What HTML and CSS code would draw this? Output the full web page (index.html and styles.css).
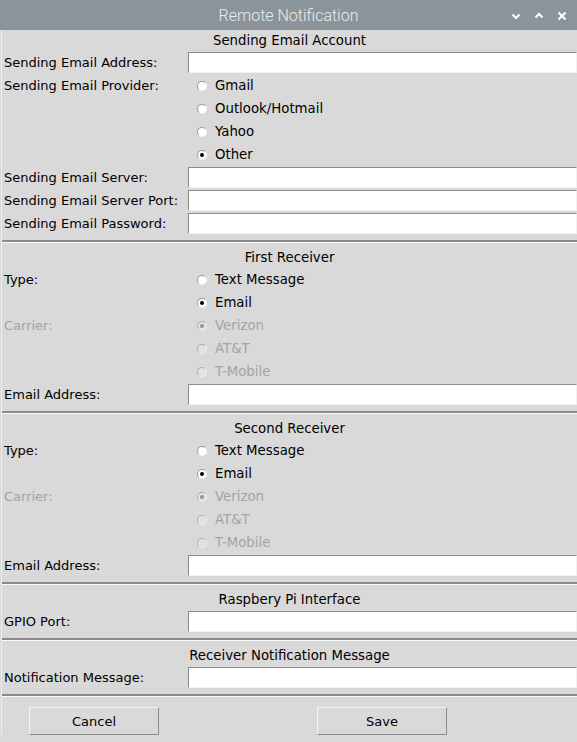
FILE: index.html
```html
<!DOCTYPE html>
<html>
<head>
<meta charset="utf-8">
<title>Remote Notification</title>
<link rel="stylesheet" href="styles.css">
</head>
<body>
<div class="window">
  <div class="titlebar">
    <span class="title">Remote Notification</span>
    <div class="controls">
      <svg class="ctl" width="12" height="12" viewBox="0 0 12 12"><path d="M2.5 4.5 L6 8 L9.5 4.5" fill="none" stroke="#fff" stroke-width="2"/></svg>
      <svg class="ctl" width="12" height="12" viewBox="0 0 12 12"><path d="M2.5 7.5 L6 4 L9.5 7.5" fill="none" stroke="#fff" stroke-width="2"/></svg>
      <svg class="ctl" width="12" height="12" viewBox="0 0 12 12"><path d="M2.5 2.5 L9.5 9.5 M9.5 2.5 L2.5 9.5" fill="none" stroke="#fff" stroke-width="2"/></svg>
    </div>
  </div>
  <div class="content">
    <section class="section first">
      <div class="heading">Sending Email Account</div>
      <div class="grid">
        <div class="label">Sending Email Address:</div><div class="cell"><input class="entry" type="text"></div>
        <div class="label">Sending Email Provider:</div><div class="cell"><span class="radio"><span class="dot"></span>Gmail</span></div>
        <div class="label"></div><div class="cell"><span class="radio"><span class="dot"></span>Outlook/Hotmail</span></div>
        <div class="label"></div><div class="cell"><span class="radio"><span class="dot"></span>Yahoo</span></div>
        <div class="label"></div><div class="cell"><span class="radio"><span class="dot on"></span>Other</span></div>
        <div class="label">Sending Email Server:</div><div class="cell"><input class="entry" type="text"></div>
        <div class="label">Sending Email Server Port:</div><div class="cell"><input class="entry" type="text"></div>
        <div class="label">Sending Email Password:</div><div class="cell"><input class="entry" type="password"></div>
      </div>
    </section>
    <hr class="sep">
    <section class="section">
      <div class="heading">First Receiver</div>
      <div class="grid">
        <div class="label">Type:</div><div class="cell"><span class="radio"><span class="dot"></span>Text Message</span></div>
        <div class="label"></div><div class="cell"><span class="radio"><span class="dot on"></span>Email</span></div>
        <div class="label disabled">Carrier:</div><div class="cell"><span class="radio disabled"><span class="dot on"></span>Verizon</span></div>
        <div class="label"></div><div class="cell"><span class="radio disabled"><span class="dot"></span>AT&amp;T</span></div>
        <div class="label"></div><div class="cell"><span class="radio disabled"><span class="dot"></span>T-Mobile</span></div>
        <div class="label">Email Address:</div><div class="cell"><input class="entry" type="text"></div>
      </div>
    </section>
    <hr class="sep">
    <section class="section">
      <div class="heading">Second Receiver</div>
      <div class="grid">
        <div class="label">Type:</div><div class="cell"><span class="radio"><span class="dot"></span>Text Message</span></div>
        <div class="label"></div><div class="cell"><span class="radio"><span class="dot on"></span>Email</span></div>
        <div class="label disabled">Carrier:</div><div class="cell"><span class="radio disabled"><span class="dot on"></span>Verizon</span></div>
        <div class="label"></div><div class="cell"><span class="radio disabled"><span class="dot"></span>AT&amp;T</span></div>
        <div class="label"></div><div class="cell"><span class="radio disabled"><span class="dot"></span>T-Mobile</span></div>
        <div class="label">Email Address:</div><div class="cell"><input class="entry" type="text"></div>
      </div>
    </section>
    <hr class="sep">
    <section class="section">
      <div class="heading">Raspbery Pi Interface</div>
      <div class="grid">
        <div class="label">GPIO Port:</div><div class="cell"><input class="entry" type="text"></div>
      </div>
    </section>
    <hr class="sep">
    <section class="section">
      <div class="heading">Receiver Notification Message</div>
      <div class="grid">
        <div class="label">Notification Message:</div><div class="cell"><input class="entry" type="text"></div>
      </div>
    </section>
    <hr class="sep">
    <div class="buttons">
      <button class="btn">Cancel</button>
      <button class="btn">Save</button>
    </div>
  </div>
</div>
</body>
</html>
```
FILE: styles.css
```css
html, body {
  margin: 0;
  padding: 0;
  background: #d9d9d9;
}
.window {
  width: 577px;
  height: 742px;
  background: #d9d9d9;
  font-family: "DejaVu Sans", sans-serif;
  font-size: 13px;
  color: #000;
  overflow: hidden;
}
.titlebar {
  height: 30px;
  background: #8b949a;
  display: flex;
  align-items: center;
  justify-content: center;
  position: relative;
}
.title {
  font-family: Roboto, "Noto Sans", sans-serif;
  font-weight: 300;
  font-size: 16px;
  color: #e9ecee;
  line-height: 30px;
  padding-top: 2px;
}
.controls {
  position: absolute;
  right: 9px;
  top: 10px;
  display: flex;
  gap: 11px;
}
.ctl { display: block; }
.content {
  border-left: 1px solid #ececec;
  margin-left: 1px;
}
.section {
  padding-bottom: 5px;
}
.heading {
  text-align: center;
  line-height: 21px;
  padding-top: 4px;
  font-size: 13.3px;
}
.section.first .heading {
  padding-top: 0;
}
.grid {
  display: grid;
  grid-template-columns: 186px 1fr;
  grid-auto-rows: 23px;
}
.label {
  line-height: 23px;
  padding-left: 2px;
  white-space: nowrap;
}
.label.disabled { color: #a3a3a3; }
.cell {
  display: flex;
  align-items: center;
}
.entry {
  box-sizing: border-box;
  width: 100%;
  height: 21px;
  margin: 0;
  padding: 0 2px;
  background: #fff;
  border: 1px solid;
  border-color: #8c8c8c #f2f2f2 #f2f2f2 #8c8c8c;
  outline: none;
  font: inherit;
}
.radio {
  display: flex;
  align-items: center;
  line-height: 23px;
  padding-left: 10px;
  font-size: 13.3px;
}
.radio.disabled { color: #a3a3a3; }
.dot {
  box-sizing: border-box;
  width: 10px;
  height: 10px;
  border-radius: 50%;
  background: #fff;
  border: 1px solid;
  border-color: #9a9a9a #f4f4f4 #f4f4f4 #9a9a9a;
  margin-left: -1px;
  margin-right: 8px;
  display: flex;
  align-items: center;
  justify-content: center;
  margin-top: 1px;
}
.dot.on::after {
  content: "";
  width: 4px;
  height: 4px;
  border-radius: 50%;
  background: #000;
}
.radio.disabled .dot {
  background: #e2e2e2;
  border-color: #b0b0b0 #eeeeee #eeeeee #b0b0b0;
}
.radio.disabled .dot.on::after {
  background: #949494;
}
.sep {
  margin: 0;
  height: 0;
  border: 0;
  border-top: 2px solid #8a8a8a;
  border-bottom: 1px solid #fafafa;
}
.buttons {
  display: flex;
  gap: 158px;
  padding-left: 27px;
  padding-top: 10px;
}
.btn {
  box-sizing: border-box;
  width: 130px;
  height: 28px;
  margin: 0;
  background: #d9d9d9;
  border: 1px solid;
  border-color: #f4f4f4 #8c8c8c #8c8c8c #f4f4f4;
  font-family: "DejaVu Sans", sans-serif;
  font-size: 13px;
  color: #000;
  padding: 0;
}
```
